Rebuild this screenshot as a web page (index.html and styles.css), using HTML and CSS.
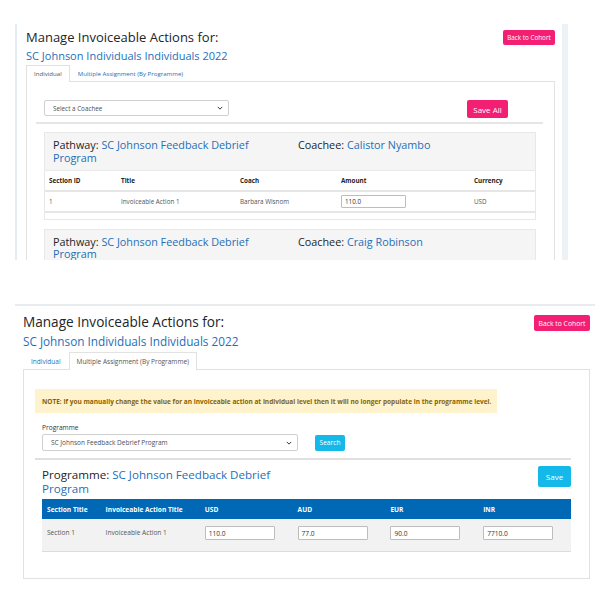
FILE: index.html
```html
<!DOCTYPE html>
<html>
<head>
<meta charset="utf-8">
<link rel="stylesheet" href="styles.css">
</head>
<body>
<section class="shot shot-a">
  <div class="page-head">
    <div class="head-text">
      <h1 class="title">Manage Invoiceable Actions for:</h1>
      <h2 class="subtitle">SC Johnson Individuals Individuals 2022</h2>
    </div>
    <button class="btn btn-pink btn-back">Back to Cohort</button>
  </div>
  <ul class="tabs">
    <li class="tab active">Individual</li>
    <li class="tab">Multiple Assignment (By Programme)</li>
  </ul>
  <div class="pane">
    <div class="toolbar">
      <div class="select select-coachee"><span>Select a Coachee</span><svg class="chev" viewBox="0 0 8 5" width="6" height="4"><path d="M1 1l3 3 3-3" fill="none" stroke="#333" stroke-width="1.3"/></svg></div>
      <button class="btn btn-pink btn-saveall">Save All</button>
    </div>
    <hr class="rule">
    <div class="card">
      <div class="card-head">
        <div class="half"><span class="lbl">Pathway:</span> <span class="link">SC Johnson Feedback Debrief Program</span></div>
        <div class="half"><span class="lbl">Coachee:</span> <span class="link">Calistor Nyambo</span></div>
      </div>
      <table class="grid">
        <thead>
          <tr><th class="c-id">Section ID</th><th class="c-title">Title</th><th class="c-coach">Coach</th><th class="c-amt">Amount</th><th class="c-cur">Currency</th></tr>
        </thead>
        <tbody>
          <tr><td>1</td><td>Invoiceable Action 1</td><td>Barbara Wisnom</td><td><span class="input amt">110.0</span></td><td>USD</td></tr>
        </tbody>
      </table>
      <div class="card-foot"></div>
    </div>
    <div class="card">
      <div class="card-head">
        <div class="half"><span class="lbl">Pathway:</span> <span class="link">SC Johnson Feedback Debrief Program</span></div>
        <div class="half"><span class="lbl">Coachee:</span> <span class="link">Craig Robinson</span></div>
      </div>
    </div>
  </div>
</section>

<section class="shot shot-b">
  <div class="page-head">
    <div class="head-text">
      <h1 class="title">Manage Invoiceable Actions for:</h1>
      <h2 class="subtitle">SC Johnson Individuals Individuals 2022</h2>
    </div>
    <button class="btn btn-pink btn-back">Back to Cohort</button>
  </div>
  <ul class="tabs">
    <li class="tab">Individual</li>
    <li class="tab active">Multiple Assignment (By Programme)</li>
  </ul>
  <div class="pane">
    <div class="note">NOTE: If you manually change the value for an invoiceable action at individual level then it will no longer populate in the programme level.</div>
    <div class="field-label">Programme</div>
    <div class="search-row">
      <div class="select select-prog"><span>SC Johnson Feedback Debrief Program</span><svg class="chev" viewBox="0 0 8 5" width="6" height="4"><path d="M1 1l3 3 3-3" fill="none" stroke="#333" stroke-width="1.3"/></svg></div>
      <button class="btn btn-cyan btn-search">Search</button>
    </div>
    <hr class="rule">
    <div class="prog-head">
      <div class="prog-title"><span class="lbl">Programme:</span> <span class="link">SC Johnson Feedback Debrief Program</span></div>
      <button class="btn btn-cyan btn-save">Save</button>
    </div>
    <table class="grid-b">
      <thead>
        <tr><th class="b1">Section Title</th><th class="b2">Invoiceable Action Title</th><th class="b3">USD</th><th class="b3">AUD</th><th class="b3">EUR</th><th class="b3">INR</th></tr>
      </thead>
      <tbody>
        <tr><td>Section 1</td><td>Invoiceable Action 1</td><td><span class="input cur">110.0</span></td><td><span class="input cur">77.0</span></td><td><span class="input cur">90.0</span></td><td><span class="input cur">7710.0</span></td></tr>
      </tbody>
    </table>
  </div>
</section>
</body>
</html>
```

FILE: styles.css
```css
* { box-sizing: border-box; }
html, body { margin: 0; padding: 0; background: #fff; }
body { font-family: "Open Sans", "Liberation Sans", sans-serif; color: #212529; }
h1, h2 { margin: 0; font-weight: 400; }
ul { margin: 0; padding: 0; list-style: none; }
button { font-family: inherit; border: 0; cursor: pointer; }
.link { color: #1f6fb8; }
.lbl { color: #212529; }

.btn { color: #fff; border-radius: 2px; display: inline-flex; align-items: center; justify-content: center; padding: 0; }
.btn-pink { background: #f31f72; }
.btn-cyan { background: #14b9ea; }

/* ---------- shot A ---------- */
.shot-a {
  margin: 24px 0 0 15px;
  width: 553px;
  height: 236px;
  overflow: hidden;
  border-left: 2px solid #e3ebf3;
  border-right: 6px solid #edf2f7;
  padding: 5px 7px 0 9px;
}
.shot-a .page-head { display: flex; justify-content: space-between; align-items: flex-start; }
.shot-a .title { font-size: 13px; line-height: 17px; }
.shot-a .subtitle { font-size: 11px; line-height: 15px; color: #1f6fb8; margin-top: 2px; }
.shot-a .btn-back { width: 52px; height: 15px; font-size: 6.3px; margin-top: 1px; }
.shot-a .tabs { display: flex; margin-top: 2px; border-bottom: 1px solid #e2e2e2; height: 17px; }
.shot-a .tab { font-size: 6.1px; padding: 0 7px; line-height: 16px; color: #1f6fb8; border: 1px solid transparent; border-bottom: 0; }
.shot-a .tab.active { color: #555; border-color: #e2e2e2; background: #fff; height: 17px; }
.shot-a .pane { border: 1px solid #e2e2e2; border-top: 0; height: 200px; padding: 18px 0 0 0; }
.shot-a .toolbar { display: flex; align-items: flex-start; padding-left: 17px; }
.select { border: 1px solid #cfcfcf; border-radius: 2px; display: flex; align-items: center; justify-content: space-between; color: #495057; background: #fff; }
.shot-a .select-coachee { width: 185px; height: 16px; font-size: 6.3px; padding: 0 5px 0 8px; }
.shot-a .btn-saveall { width: 41px; height: 18px; font-size: 8px; margin-left: 238px; }
.shot-a .rule { margin: 4px 11px 0 9px; border: 0; border-top: 2px solid #e6e6e6; }
.shot-a .card { margin: 8px 18px 0 17px; border: 1px solid #e8e8e8; }
.shot-a .card + .card { margin-top: 9px; }
.shot-a .card-head { background: #f5f5f5; display: flex; height: 37px; padding-top: 6px; }
.shot-a .half { width: 50%; padding: 0 8px; font-size: 10.8px; line-height: 12.5px; }
.grid { width: 100%; border-collapse: collapse; font-size: 6.3px; color: #555; }
.grid th { text-align: left; font-weight: 700; color: #222; height: 20px; padding: 0 4px; border-top: 1px solid #e9e9e9; border-bottom: 2px solid #e6e6e6; }
.grid td { height: 21px; padding: 0 4px; border-bottom: 2px solid #e6e6e6; }
.c-id { width: 72px; } .c-title { width: 119px; } .c-coach { width: 101px; } .c-amt { width: 133px; }
.input { display: inline-flex; align-items: center; border: 1px solid #bdbdbd; border-radius: 1px; background: #fff; color: #333; padding-left: 3px; }
.input.amt { width: 65px; height: 13px; }
.card-foot { height: 6px; }

/* ---------- shot B ---------- */
.shot-b {
  margin: 44px 0 0 15px;
  width: 580px;
  border-top: 2px solid #e9ecef;
  padding: 7px 5px 0 8px;
}
.shot-b .page-head { display: flex; justify-content: space-between; align-items: flex-start; }
.shot-b .title { font-size: 13.6px; line-height: 18px; }
.shot-b .subtitle { font-size: 11.75px; line-height: 16px; color: #1f6fb8; margin-top: 2px; }
.shot-b .btn-back { width: 56px; height: 16px; font-size: 6.8px; margin-top: 2px; }
.shot-b .tabs { display: flex; margin-top: 3px; border-bottom: 1px solid #e2e2e2; height: 18px; padding-left: 0; }
.shot-b .tab { font-size: 6.5px; padding: 0 7px; line-height: 17px; color: #1f6fb8; border: 1px solid transparent; border-bottom: 0; }
.shot-b .tab.active { color: #555; border-color: #e2e2e2; background: #fff; height: 18px; }
.shot-b .pane { border: 1px solid #e2e2e2; border-top: 0; padding: 19px 18px 26px 11px; }
.note { width: 462px; height: 24px; background: #fff3cd; color: #856404; font-weight: 700; font-size: 6.5px; display: flex; align-items: center; padding-left: 7px; }
.field-label { font-size: 6.6px; color: #333; margin: 10px 0 0 7px; line-height: 9px; }
.search-row { display: flex; align-items: center; margin: 2px 0 0 7px; }
.shot-b .select-prog { width: 256px; height: 17px; font-size: 6.5px; padding: 0 5px 0 8px; }
.btn-search { width: 30px; height: 16px; font-size: 6.6px; margin-left: 17px; }
.shot-b .rule { margin: 7px 0 0 0; border: 0; border-top: 2px solid #e0e0e0; }
.prog-head { display: flex; justify-content: space-between; align-items: flex-start; margin: 6px 0 0 7px; }
.prog-title { width: 260px; font-size: 11.6px; line-height: 14px; padding-top: 2px; }
.btn-save { width: 33px; height: 21px; font-size: 8px; }
.grid-b { margin: 3px 0 0 7px; width: 529px; border-collapse: collapse; font-size: 6.6px; }
.grid-b th { background: #0068b4; color: #fff; text-align: left; font-weight: 700; height: 20px; padding: 0 5px; }
.grid-b td { background: #f2f2f2; color: #555; height: 32px; padding: 0 5px; border-bottom: 1px solid #dcdcdc; vertical-align: top; padding-top: 9px; }
.b1 { width: 59px; } .b2 { width: 100px; } .b3 { width: 93px; }
.input.cur { width: 70px; height: 14px; margin-top: -2px; }
```
